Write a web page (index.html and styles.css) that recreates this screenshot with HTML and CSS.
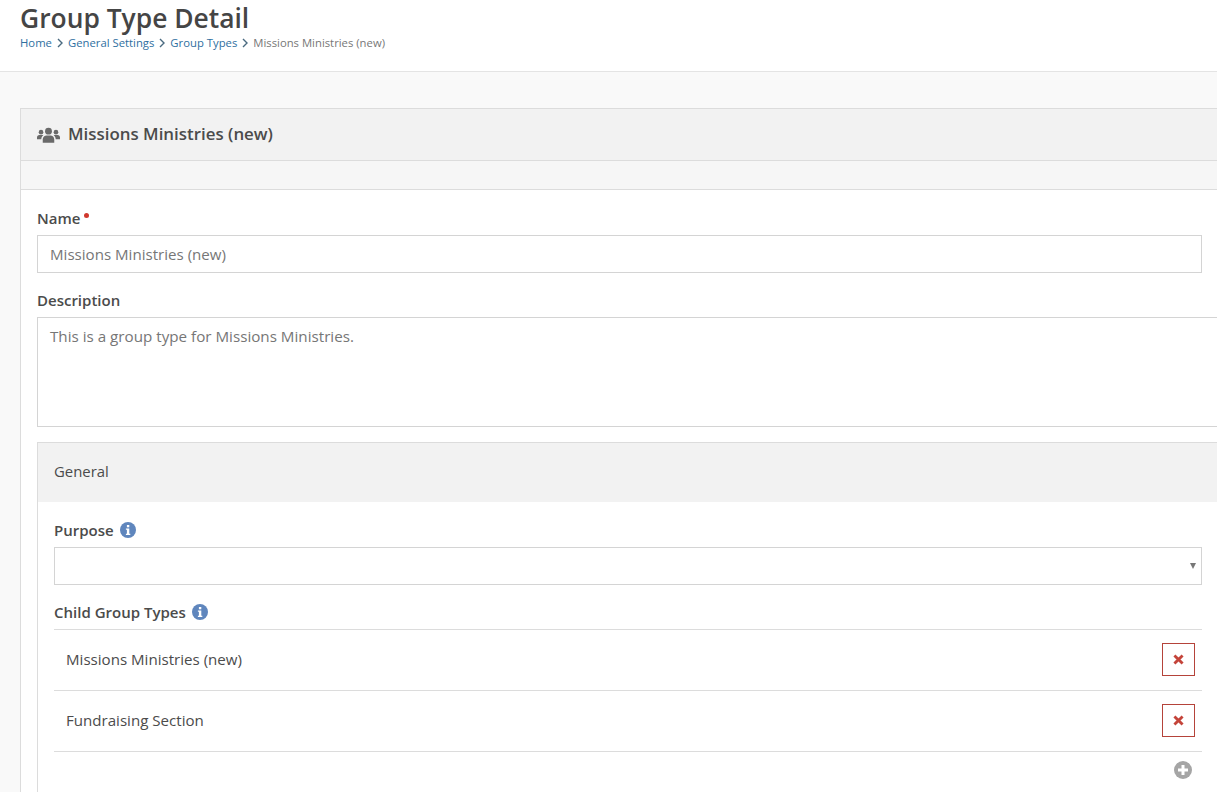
FILE: index.html
```html
<!DOCTYPE html>
<html lang="en">
<head>
<meta charset="utf-8">
<title>Group Type Detail</title>
<link rel="stylesheet" href="styles.css">
</head>
<body>
<header class="page-header">
  <h1 class="page-title">Group Type Detail</h1>
  <nav class="breadcrumb">
    <a href="#">Home</a>
    <svg class="crumb-sep" viewBox="0 0 6 10"><path d="M1 1l4 4-4 4" fill="none" stroke="#4a6a80" stroke-width="1.4"/></svg>
    <a href="#">General Settings</a>
    <svg class="crumb-sep" viewBox="0 0 6 10"><path d="M1 1l4 4-4 4" fill="none" stroke="#4a6a80" stroke-width="1.4"/></svg>
    <a href="#">Group Types</a>
    <svg class="crumb-sep" viewBox="0 0 6 10"><path d="M1 1l4 4-4 4" fill="none" stroke="#4a6a80" stroke-width="1.4"/></svg>
    <span class="crumb-current">Missions Ministries (new)</span>
  </nav>
</header>
<main class="content">
  <section class="panel">
    <div class="panel-heading">
      <svg class="users-icon" viewBox="0 0 24 16"><g fill="#6a6a6a"><circle cx="12" cy="4" r="3.6"/><circle cx="4.2" cy="5" r="2.4"/><circle cx="19.8" cy="5" r="2.4"/><path d="M6 16v-3.2C6 10 8 8.600 10 8.600h4c2 0 4 1.400 4 4.200V16z"/><path d="M0 12.500V10.500C0 9 1 8 2.500 8h3c.4 0 .8.100 1.100.300C5.200 9.300 4.500 10.800 4.500 12.500z"/><path d="M24 12.500V10.500C24 9 23 8 21.500 8h-3c-.4 0-.8.100-1.100.300 1.400 1 2.100 2.500 2.100 4.200z"/></g></svg>
      <h2 class="panel-title">Missions Ministries (new)</h2>
    </div>
    <div class="panel-subbar"></div>
    <div class="panel-body">
      <div class="field">
        <label class="label">Name<span class="required"></span></label>
        <div class="input narrow">Missions Ministries (new)</div>
      </div>
      <div class="field">
        <label class="label">Description</label>
        <div class="input textarea">This is a group type for Missions Ministries.</div>
      </div>
      <section class="sub-panel">
        <div class="sub-heading">General</div>
        <div class="sub-body">
          <div class="field">
            <label class="label">Purpose<svg class="info" viewBox="0 0 16 16"><circle cx="8" cy="8" r="8" fill="#5f86bd"/><rect x="6.900" y="3" width="2.400" height="2.300" fill="#fff"/><path d="M5.900 6.500h3.400v5.200h1v1.300H5.900v-1.300h1V7.800h-1z" fill="#fff"/></svg></label>
            <div class="input select narrow"><span class="caret"></span></div>
          </div>
          <div class="field tight">
            <label class="label">Child Group Types<svg class="info" viewBox="0 0 16 16"><circle cx="8" cy="8" r="8" fill="#5f86bd"/><rect x="6.900" y="3" width="2.400" height="2.300" fill="#fff"/><path d="M5.900 6.500h3.400v5.200h1v1.300H5.900v-1.300h1V7.800h-1z" fill="#fff"/></svg></label>
            <div class="list narrow">
              <div class="row">
                <span>Missions Ministries (new)</span>
                <button class="remove"><svg viewBox="0 0 10 10"><path d="M1.300 1.300l7.400 7.400M8.700 1.300L1.300 8.700" stroke="#c4443a" stroke-width="2.600"/></svg></button>
              </div>
              <div class="row">
                <span>Fundraising Section</span>
                <button class="remove"><svg viewBox="0 0 10 10"><path d="M1.300 1.300l7.400 7.400M8.700 1.300L1.300 8.700" stroke="#c4443a" stroke-width="2.600"/></svg></button>
              </div>
              <div class="add-row">
                <svg class="add" viewBox="0 0 18 18"><circle cx="9" cy="9" r="9" fill="#a5a5a5"/><path d="M9 4v10M4 9h10" stroke="#fff" stroke-width="3"/></svg>
              </div>
            </div>
          </div>
        </div>
      </section>
    </div>
  </section>
</main>
</body>
</html>
```

FILE: styles.css
```css
* { box-sizing: border-box; }
html, body { height: 100%; }
body {
  margin: 0;
  width: 1217px;
  height: 792px;
  overflow: hidden;
  background: #f9f9f9;
  color: #4b4b4b;
  font-family: "Open Sans", sans-serif;
  font-size: 15px;
}
.page-header {
  height: 72px;
  padding: 0 20px;
  background: #fff;
  border-bottom: 1px solid #e4e4e4;
}
.page-title {
  margin: 0;
  font-size: 26.400px;
  line-height: 36px;
  font-weight: 600;
  color: #454545;
}
.breadcrumb {
  display: flex;
  align-items: center;
  margin-top: -1px;
  font-size: 11.300px;
  line-height: 16px;
}
.breadcrumb a { color: #2f6f9f; text-decoration: none; }
.crumb-sep { width: 6px; height: 10px; margin: 0 5px; }
.crumb-current { color: #777; }
.content { padding: 36px 0 0 20px; }
.panel {
  width: 1300px;
  background: #fff;
  border: 1px solid #dcdcdc;
}
.panel-heading {
  display: flex;
  align-items: center;
  gap: 8px;
  height: 52px;
  padding: 0 16px;
  background: #f2f2f2;
  border-bottom: 1px solid #dcdcdc;
}
.users-icon { width: 23px; height: 16px; }
.panel-title {
  margin: 0;
  padding-bottom: 2px;
  font-size: 16.900px;
  font-weight: 600;
  color: #4b4b4b;
}
.panel-subbar {
  height: 29px;
  background: #f6f6f6;
  border-bottom: 1px solid #dcdcdc;
}
.panel-body { padding: 16px; }
.field { margin-bottom: 15px; }
.label {
  display: flex;
  align-items: center;
  height: 24px;
  margin-bottom: 5px;
  font-size: 15px;
  font-weight: 600;
  color: #4b4b4b;
}
.required {
  width: 5px;
  height: 5px;
  margin: -6px 0 0 4px;
  border-radius: 50%;
  background: #d0392e;
}
.info { width: 16px; height: 16px; margin-left: 6px; }
.input {
  display: flex;
  align-items: center;
  height: 38px;
  padding: 0 12px;
  border: 1px solid #d4d4d4;
  background: #fff;
  font-size: 15.100px;
  color: #767676;
}
.narrow { width: 1165px; }
.textarea {
  align-items: flex-start;
  height: 110px;
  padding-top: 8px;
  font-size: 15.200px;
  line-height: 20px;
}
.select { justify-content: flex-end; padding-right: 5px; }
.caret {
  width: 0;
  height: 0;
  border-left: 3px solid transparent;
  border-right: 3px solid transparent;
  border-top: 6px solid #777;
}
.sub-panel { margin-top: 15px; border: 1px solid #dcdcdc; }
.sub-heading {
  display: flex;
  align-items: center;
  height: 59px;
  padding: 0 16px 3px;
  background: #f2f2f2;
  font-size: 14.900px;
  color: #4b4b4b;
}
.sub-body { padding: 16px; }
.sub-body .field .narrow { width: 1148px; }
.tight { margin-bottom: 0; }
.list { border-top: 1px solid #dcdcdc; }
.row {
  display: flex;
  align-items: center;
  justify-content: space-between;
  height: 61px;
  padding: 0 7px 2px 12px;
  border-bottom: 1px solid #dcdcdc;
  font-size: 15.100px;
  color: #4b4b4b;
}
.remove {
  display: flex;
  align-items: center;
  justify-content: center;
  width: 33px;
  height: 33px;
  padding: 0;
  background: #fff;
  border: 1px solid #b5433a;
}
.remove svg { width: 11px; height: 11px; }
.add-row { display: flex; justify-content: flex-end; padding: 9px 10px 0 0; }
.add { width: 18px; height: 18px; }
```
